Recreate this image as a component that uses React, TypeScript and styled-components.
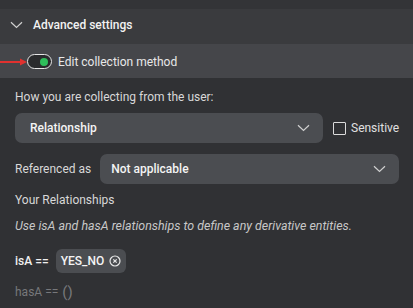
import React from 'react';
import styled, { createGlobalStyle } from 'styled-components';

const GlobalStyle = createGlobalStyle`
  html, body {
    margin: 0;
    padding: 0;
    background: #303134;
  }
  body {
    font-family: Roboto, "Liberation Sans", sans-serif;
    font-size: 12px;
    color: #e6e6e6;
  }
`;

const Panel = styled.div`
  width: 413px;
  height: 308px;
  overflow: hidden;
  background: #303134;
  border-top: 9px solid #333437;
  box-sizing: border-box;
`;

const SectionHeader = styled.div`
  height: 35px;
  display: flex;
  align-items: center;
  gap: 10px;
  padding: 0 0 4px 10px;
  box-sizing: border-box;
  background: #3a3b3e;
  font-size: 12px;
  font-weight: 500;
  color: #f2f2f2;
`;

const ToggleRow = styled.div`
  height: 34px;
  display: flex;
  align-items: center;
  background: #45464a;
  position: relative;
  padding: 1px 0 0 27px;
  box-sizing: border-box;
  gap: 6px;
  font-size: 12px;
  color: #e8e8e8;
`;

const Arrow = styled.svg`
  position: absolute;
  left: 0;
  top: 50%;
  margin-top: -3px;
`;

const Toggle = styled.div`
  width: 25px;
  height: 15px;
  box-sizing: border-box;
  border: 1.5px solid #e6e6e6;
  border-radius: 8px;
  background: #2a2b2d;
  display: flex;
  align-items: center;
  justify-content: flex-end;
  padding-right: 3px;
`;

const Dot = styled.div`
  width: 8px;
  height: 8px;
  border-radius: 50%;
  background: #2fbf5b;
`;

const Body = styled.div`
  padding: 11px 14px 0 15px;
  display: flex;
  flex-direction: column;
`;

const Label = styled.div`
  color: #d8d8d8;
  font-size: 12px;
  line-height: 16px;
`;

const Row = styled.div<{ $gap: number; $top: number }>`
  display: flex;
  align-items: center;
  gap: ${p => p.$gap}px;
  margin-top: ${p => p.$top}px;
`;

const Select = styled.div<{ $width?: string; $pad: number }>`
  flex: ${p => (p.$width ? `0 0 ${p.$width}` : '1')};
  height: 30px;
  background: #4b4d51;
  border-radius: 7px;
  display: flex;
  align-items: center;
  justify-content: space-between;
  padding: 0 13px 0 ${p => p.$pad}px;
  box-sizing: border-box;
  font-size: 12px;
  font-weight: 500;
  color: #f4f4f4;
`;

const CheckLabel = styled.label`
  display: flex;
  align-items: center;
  gap: 5px;
  font-size: 12px;
  color: #e0e0e0;
`;

const Box = styled.span`
  width: 11px;
  height: 11px;
  border: 1px solid #dcdcdc;
  border-radius: 1px;
`;

const Heading = styled(Label)`
  margin-top: 8px;
`;

const Italic = styled.div`
  font-style: italic;
  color: #c8c8c8;
  font-size: 12.4px;
  line-height: 16px;
  margin-top: 10px;
`;

const Expr = styled.div<{ $dim?: boolean; $top: number }>`
  display: flex;
  align-items: center;
  gap: 7px;
  margin-top: ${p => p.$top}px;
  font-size: 12px;
  font-weight: ${p => (p.$dim ? 400 : 500)};
  color: ${p => (p.$dim ? '#77787b' : '#f0f0f0')};
`;

const Paren = styled.span`
  font-size: 15px;
  margin-left: -3px;
`;

const Chip = styled.div`
  height: 24px;
  display: flex;
  align-items: center;
  gap: 5px;
  padding: 0 5px;
  background: #4b4d51;
  border-radius: 6px;
  font-weight: 500;
  color: #f4f4f4;
`;

const Chevron = () => (
  <svg width={13} height={8} viewBox="0 0 13 8" fill="none">
    <path d="M1 1.2 L6.5 6.5 L12 1.2" stroke="#d0d0d0" strokeWidth="1.2" />
  </svg>
);

export default function App() {
  return (
    <>
      <GlobalStyle />
      <Panel>
        <SectionHeader>
          <Chevron />
          <span>Advanced settings</span>
        </SectionHeader>
        <ToggleRow>
          <Arrow width="28" height="8" viewBox="0 0 28 8">
            <line x1="0" y1="4" x2="21" y2="4" stroke="#e0312f" strokeWidth="2" />
            <path d="M20 0.5 L27 4 L20 7.5 Z" fill="#e0312f" />
          </Arrow>
          <Toggle>
            <Dot />
          </Toggle>
          <span>Edit collection method</span>
        </ToggleRow>
        <Body>
          <Label>How you are collecting from the user:</Label>
          <Row $gap={10} $top={8}>
            <Select $width="308px" $pad={15}>
              <span>Relationship</span>
              <Chevron />
            </Select>
            <CheckLabel>
              <Box />
              Sensitive
            </CheckLabel>
          </Row>
          <Row $gap={9} $top={11}>
            <Label>Referenced as</Label>
            <Select $pad={11}>
              <span>Not applicable</span>
              <Chevron />
            </Select>
          </Row>
          <Heading>Your Relationships</Heading>
          <Italic>Use isA and hasA relationships to define any derivative entities.</Italic>
          <Expr $top={15}>
            <span>isA ==</span>
            <Chip>
              YES_NO
              <svg width="12" height="12" viewBox="0 0 12 12" fill="none">
                <circle cx="6" cy="6" r="5" stroke="#e8e8e8" strokeWidth="1.2" />
                <path d="M4.3 4.3 L7.7 7.7 M7.7 4.3 L4.3 7.7" stroke="#e8e8e8" strokeWidth="1.2" />
              </svg>
            </Chip>
          </Expr>
          <Expr $dim $top={10}>
            <span>hasA ==</span>
            <Paren>()</Paren>
          </Expr>
        </Body>
      </Panel>
    </>
  );
}
